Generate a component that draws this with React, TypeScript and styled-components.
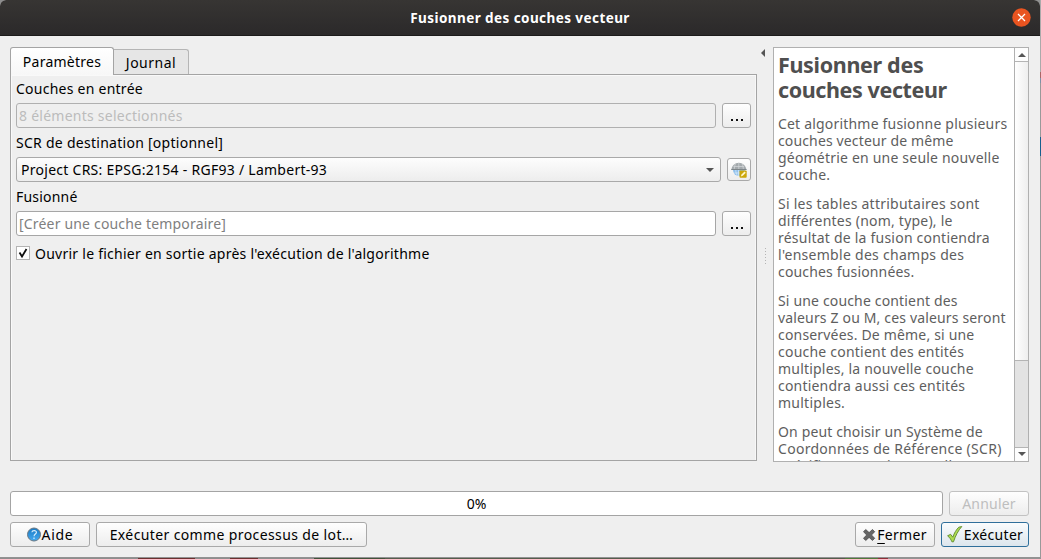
import React from "react";
import styled, { createGlobalStyle } from "styled-components";

const GlobalStyle = createGlobalStyle`
  * { box-sizing: border-box; }
  body { margin: 0; background: #8f8f8f; overflow: hidden; }
  button { font: inherit; color: inherit; margin: 0; }
`;

const Desktop = styled.div`
  width: 1041px;
  height: 559px;
  overflow: hidden;
  background: linear-gradient(90deg, #8d8d8d 0 138px, #6b3030 138px 195px, #8d8d8d 195px 230px, #6b3030 230px 258px, #8d8d8d 258px 314px, #41523a 314px 385px, #555d4c 385px 845px, #4f7a3a 845px 878px, #8c3038 878px 888px, #929292 888px);
  font-family: "Noto Sans", "Open Sans", sans-serif;
  font-size: 14px;
  color: #000;
`;

const Row = styled.div`
  display: flex;
`;

const Edge = styled.div`
  width: 1px;
  height: 558px;
  background: linear-gradient(#aaa 0 72px, #a66 72px 78px, #7d91a8 78px 83px, #999 83px 137px, #17608e 137px 156px, #999 156px);
`;

const Window = styled.div`
  width: 1040px;
  height: 558px;
  display: flex;
  flex-direction: column;
  background: #efefef;
  border-bottom: 1px solid #929292;
  border-radius: 6px 6px 0 0;
  overflow: hidden;
`;

const TitleBar = styled.header`
  height: 36px;
  flex: none;
  display: grid;
  grid-template-columns: 40px 1fr 40px;
  align-items: center;
  justify-items: center;
  background: linear-gradient(#373533, #2b292a);
  border-bottom: 1px solid #1c1b1b;
  color: #fff;
  font-weight: 700;
  font-size: 13.5px;
`;

const Text = styled.span<{ $ls?: number }>`
  white-space: pre;
  letter-spacing: ${(p) => p.$ls ?? 0.25}px;
`;

const CloseIcon = styled.svg`
  display: block;
  margin: 0 0 1px 3px;
`;

const Body = styled.div`
  display: flex;
  height: 415px;
  margin: 11px 11px 0 10px;
`;

const Left = styled.div`
  width: 747px;
  height: 414px;
  display: flex;
  flex-direction: column;
`;

const Tabs = styled.div`
  display: flex;
  align-items: flex-end;
  height: 28px;
  margin-bottom: -1px;
  z-index: 1;
`;

const Tab = styled.div<{ $active?: boolean }>`
  width: ${(p) => (p.$active ? 104 : 75)}px;
  height: ${(p) => (p.$active ? 28 : 25)}px;
  margin-bottom: ${(p) => (p.$active ? 0 : 1)}px;
  display: flex;
  align-items: center;
  justify-content: center;
  border: 1px solid ${(p) => (p.$active ? "#a4a4a4" : "#b5b5b5")};
  border-bottom: 0;
  border-left-width: ${(p) => (p.$active ? 1 : 0)}px;
  border-radius: ${(p) => (p.$active ? "3px 3px 0 0" : "0 3px 0 0")};
  background: ${(p) => (p.$active ? "linear-gradient(#fff, #f7f7f7)" : "#e6e6e6")};
  padding-bottom: ${(p) => (p.$active ? 1 : 0)}px;
`;

const Panel = styled.section`
  flex: 1;
  border: 1px solid #a4a4a4;
  box-shadow: inset 1px 1px 0 #f9f9f9, inset -1px 0 0 #f7f7f7;
  padding: 4px 5px;
  display: flex;
  flex-direction: column;
`;

const Label = styled.label`
  height: 20px;
  line-height: 20px;
  margin-bottom: 4px;
`;

const FieldRow = styled.div`
  display: flex;
  align-items: center;
  justify-content: space-between;
  height: 25px;
  margin-bottom: 5px;
`;

const Field = styled.div<{ $disabled?: boolean }>`
  width: 700px;
  height: 25px;
  padding-left: 2px;
  line-height: 23px;
  border: 1px solid ${(p) => (p.$disabled ? "#b0b0b0" : "#a6a6a6")};
  border-radius: 3px;
  background: ${(p) => (p.$disabled ? "#efefef" : "#fff")};
  color: ${(p) => (p.$disabled ? "#bcbcbc" : "#808080")};
`;

const Combo = styled.div`
  width: 705px;
  height: 25px;
  padding: 0 6px 0 4px;
  display: flex;
  align-items: center;
  justify-content: space-between;
  border: 1px solid #a9a9a9;
  border-radius: 3px;
  background: linear-gradient(#fdfdfd, #ededed);
`;

const Button = styled.button<{ $w: number; $h?: number; $kind?: "primary" | "disabled" }>`
  width: ${(p) => p.$w}px;
  height: ${(p) => p.$h ?? 25}px;
  flex: none;
  padding: 0;
  display: flex;
  align-items: center;
  justify-content: center;
  border: 1px solid ${(p) => (p.$kind === "primary" ? "#2f6f9b" : p.$kind === "disabled" ? "#c2c2c2" : "#a9a9a9")};
  border-radius: 3px;
  background: ${(p) => (p.$kind === "primary" ? "linear-gradient(#fafcfd, #dce5ec)" : "linear-gradient(#fefefe, #ededed)")};
  color: ${(p) => (p.$kind === "disabled" ? "#bebebe" : "#000")};
`;

const Dots = styled.span`
  display: flex;
  gap: 3px;
  margin-top: 9px;
  i { width: 2px; height: 2px; background: #111; }
`;

const CheckRow = styled.div`
  display: flex;
  align-items: center;
  gap: 5px;
  margin-top: 2px;
  height: 20px;
`;

const CheckBox = styled.span`
  width: 14px;
  height: 14px;
  border: 1px solid #b4b4b4;
  background: #fff;
  svg { display: block; }
`;

const Splitter = styled.div`
  width: 16px;
  display: flex;
  flex-direction: column;
  align-items: flex-start;
  svg { display: block; margin: 2px 0 0 4px; }
`;

const Grip = styled.div`
  width: 1px;
  height: 17px;
  margin: 191px 0 0 8px;
  background: repeating-linear-gradient(#b4b4b4 0 1px, transparent 1px 3px);
`;

const Help = styled.aside`
  width: 256px;
  height: 415px;
  display: flex;
  border: 1px solid #b0b0b0;
  background: #fff;
`;

const HelpText = styled.div`
  width: 240px;
  height: 413px;
  padding: 4px 0 0 4px;
  overflow: hidden;
  color: #5e5e5e;
`;

const Heading = styled.h1`
  margin: 0 0 13px;
  font-size: 21.5px;
  line-height: 25px;
  font-weight: 700;
  color: #4f4f4f;
  display: flex;
  flex-direction: column;
`;

const Paragraph = styled.p`
  margin: 0 0 12px;
  line-height: 17px;
  display: flex;
  flex-direction: column;
`;

const ScrollBar = styled.div`
  width: 14px;
  display: flex;
  flex-direction: column;
  border-left: 1px solid #b0b0b0;
  background: #e3e3e3;
`;

const ScrollButton = styled.div<{ $last?: boolean }>`
  height: ${(p) => (p.$last ? 14 : 13)}px;
  flex: none;
  display: flex;
  align-items: center;
  justify-content: center;
  background: #fdfdfd;
  border-top: ${(p) => (p.$last ? "1px solid #b4b4b4" : "0")};
  padding-bottom: ${(p) => (p.$last ? 2 : 0)}px;
`;

const Thumb = styled.div`
  height: 300px;
  border: solid #b4b4b4;
  border-width: 1px 0;
  background: linear-gradient(90deg, #fff, #eee);
  margin-bottom: auto;
`;

const ProgressRow = styled.div`
  display: flex;
  gap: 6px;
  margin: 29px 11px 0 10px;
`;

const Progress = styled.div`
  width: 933px;
  height: 25px;
  line-height: 23px;
  text-align: center;
  border: 1px solid #a4a4a4;
  border-radius: 3px;
  background: #fff;
`;

const Actions = styled.footer`
  display: flex;
  gap: 6px;
  margin: 6px 11px 0 10px;
`;

const Spacer = styled.div`
  flex: 1;
`;

const Mnemonic = styled.span`
  text-decoration: underline;
  text-decoration-thickness: 1px;
  text-underline-offset: 3px;
`;

const Arrow = ({ up }: { up?: boolean }) => (
  <svg width="8" height="4" viewBox="0 0 8 4">
    <path d={up ? "M0 4L4 0l4 4z" : "M0 0h8L4 4z"} fill="#555" />
  </svg>
);

const Ellipsis = () => (
  <Dots>
    <i />
    <i />
    <i />
  </Dots>
);

const GlobeIcon = () => (
  <svg width="16" height="16" viewBox="0 0 16 16">
    <path d="M2 8a6 6 0 0 0 12 0z" fill="#8fc0ec" />
    <path d="M3.500 11h8M7.500 8v6M4.800 8c0 2 .5 4 1.500 5.500" fill="none" stroke="#d3e7f8" strokeWidth=".8" />
    <path d="M.3 8C.8 3.800 4 .8 7.800.8S14.900 3.800 15.500 8z" fill="#a3a9ac" />
    <path d="M2.400 4.500h10.800M4.600 1.800C3.600 3.500 3.300 5.500 3.300 8M7.800 1v7M11 1.800c1 1.700 1.300 3.700 1.300 6.200" fill="none" stroke="#d5d9db" strokeWidth=".7" />
    <path d="M.3 7.500h15.200" stroke="#7d8589" />
    <rect x="8.500" y="8.500" width="7.200" height="7.200" rx="1" fill="#cba70a" />
    <path d="M9.800 14.400l.7-2 3-3 1.300 1.300-3 3z" fill="#fff6c8" />
  </svg>
);

const HelpIcon = () => (
  <svg width="15" height="15" viewBox="0 0 15 15">
    <defs>
      <linearGradient id="helpBlue" x1="0" y1="0" x2="0" y2="1">
        <stop offset="0" stopColor="#1879c4" />
        <stop offset="1" stopColor="#45aaf0" />
      </linearGradient>
    </defs>
    <circle cx="7" cy="7.500" r="6.500" fill="url(#helpBlue)" stroke="#6a7781" />
    <path d="M4.900 5.300c.2-2.300 4.700-2.200 4.500.2-.1 1.500-2.300 1.700-2.300 3.700M7 10.500v1.400" fill="none" stroke="#d9eefc" strokeWidth="1.200" />
  </svg>
);

const CrossIcon = () => (
  <svg width="14" height="14" viewBox="0 0 14 14">
    <path d="M2.700 1.500L6.100 4.600l3.400-3.100 2.200 2.200L8.500 7l3.200 3.300-2.200 2.200-3.400-3.100-3.400 3.100L.5 10.300 3.700 7 .5 3.700z" fill="#666" stroke="#4c4c4c" strokeWidth=".8" strokeLinejoin="round" />
  </svg>
);

const TickIcon = () => (
  <svg width="17" height="17" viewBox="0 0 17 17">
    <path d="M.6 9.800l3-1.500 2.200 2.900C7.200 7.200 9.200 3.600 11.800 1.200l3-.7C11.200 4.600 8.500 9.600 6.500 15.800H4.900C4 13.500 2.600 11.400.6 9.800z" fill="#addb52" stroke="#5d8a2c" strokeWidth=".9" strokeLinejoin="round" />
  </svg>
);

type Line = [string, number];

const heading: Line[] = [["Fusionner des", -0.33], ["couches vecteur", -0.4]];

const paragraphs: Line[][] = [
  [["Cet algorithme fusionne plusieurs", 0.19], ["couches vecteur de même", 0.14], ["géométrie en une seule nouvelle", 0.2], ["couche.", 0.2]],
  [["Si les tables attributaires sont", 0.24], ["différentes (nom, type), le", 0.22], ["résultat de la fusion contiendra", 0.22], ["l'ensemble des champs des", 0.28], ["couches fusionnées.", 0.16]],
  [["Si une couche contient des", 0.16], ["valeurs Z ou M, ces valeurs seront", 0.16], ["conservées. De même, si une", 0.18], ["couche contient des entités", 0.22], ["multiples, la nouvelle couche", 0.2], ["contiendra aussi ces entités", 0.2], ["multiples.", 0.25]],
  [["On peut choisir un Système de", 0.14], ["Coordonnées de Référence (SCR)", 0.28], ["spécifique pour la nouvelle", 0.2]],
];

const lines = (items: Line[]) => items.map(([t, ls]) => <Text key={t} $ls={ls}>{t}</Text>);

export default function App() {
  return (
    <Desktop>
      <GlobalStyle />
      <Row>
        <Window>
          <TitleBar>
            <span />
            <Text $ls={0.43}>Fusionner des couches vecteur</Text>
            <CloseIcon width="19" height="19" viewBox="0 0 19 19">
              <circle cx="9.500" cy="9.500" r="9.200" fill="#e95420" />
              <path d="M6 6l7 7M13 6l-7 7" stroke="#fff" strokeWidth="1.300" />
            </CloseIcon>
          </TitleBar>
          <Body>
            <Left>
              <Tabs>
                <Tab $active><Text>Paramètres</Text></Tab>
                <Tab><Text $ls={0.5}>Journal</Text></Tab>
              </Tabs>
              <Panel>
                <Label><Text>Couches en entrée</Text></Label>
                <FieldRow>
                  <Field $disabled><Text>8 éléments selectionnés</Text></Field>
                  <Button $w={29}><Ellipsis /></Button>
                </FieldRow>
                <Label><Text $ls={0.27}>SCR de destination [optionnel]</Text></Label>
                <FieldRow>
                  <Combo>
                    <Text $ls={0.27}>Project CRS: EPSG:2154 - RGF93 / Lambert-93</Text>
                    <Arrow />
                  </Combo>
                  <Button $w={24} $h={23}><GlobeIcon /></Button>
                </FieldRow>
                <Label><Text $ls={0.2}>Fusionné</Text></Label>
                <FieldRow>
                  <Field><Text $ls={0.18}>[Créer une couche temporaire]</Text></Field>
                  <Button $w={29}><Ellipsis /></Button>
                </FieldRow>
                <CheckRow>
                  <CheckBox>
                    <svg width="12" height="12" viewBox="0 0 12 12">
                      <path d="M2.500 5.500l2.500 4L9.500 2" fill="none" stroke="#111" strokeWidth="1.800" />
                    </svg>
                  </CheckBox>
                  <Text>Ouvrir le fichier en sortie après l'exécution de l'algorithme</Text>
                </CheckRow>
              </Panel>
            </Left>
            <Splitter>
              <svg width="4" height="8" viewBox="0 0 4 8"><path d="M4 0v8L0 4z" fill="#555" /></svg>
              <Grip />
            </Splitter>
            <Help>
              <HelpText>
                <Heading>{lines(heading)}</Heading>
                {paragraphs.map((p) => <Paragraph key={p[0][0]}>{lines(p)}</Paragraph>)}
              </HelpText>
              <ScrollBar>
                <ScrollButton><Arrow up /></ScrollButton>
                <Thumb />
                <ScrollButton $last><Arrow /></ScrollButton>
              </ScrollBar>
            </Help>
          </Body>
          <ProgressRow>
            <Progress><Text $ls={0}>0%</Text></Progress>
            <Button $w={80} $kind="disabled"><Text $ls={0.2}>Annuler</Text></Button>
          </ProgressRow>
          <Actions>
            <Button $w={80}><HelpIcon /><Text $ls={0.7}>Aide</Text></Button>
            <Button $w={271}><Text $ls={0.38}>Exécuter comme processus de lot…</Text></Button>
            <Spacer />
            <Button $w={80}><CrossIcon /><Text $ls={0.3}><Mnemonic>F</Mnemonic>ermer</Text></Button>
            <Button $w={88} $kind="primary"><TickIcon /><Text $ls={0.3}>Exécuter</Text></Button>
          </Actions>
        </Window>
        <Edge />
      </Row>
    </Desktop>
  );
}
